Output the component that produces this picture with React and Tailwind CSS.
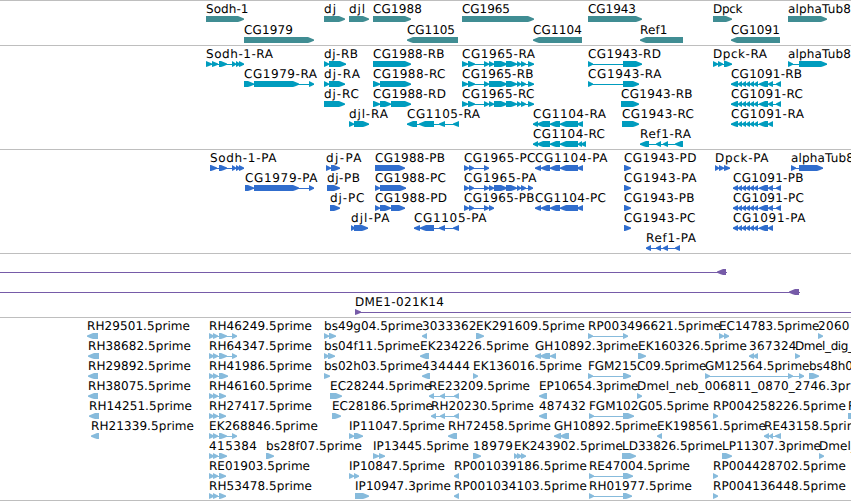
import React from "react";

// Feature: [row, label, label end x, strand, [[start, end], ...]]
const FWD = 1;
const REV = -1;

const genes = [
  [0, "Sodh-1", 248.5, FWD, [[206, 244]]],
  [1, "CG1979", 293, FWD, [[244, 314]]],
  [0, "dj", 336, FWD, [[324, 345]]],
  [0, "djl", 365, FWD, [[349, 369]]],
  [0, "CG1988", 422, FWD, [[373, 411]]],
  [1, "CG1105", 455, REV, [[407, 458]]],
  [0, "CG1965", 510, FWD, [[462, 534]]],
  [1, "CG1104", 582, REV, [[533, 582]]],
  [0, "CG1943", 636, FWD, [[588, 642]]],
  [1, "Ref1", 667.5, REV, [[640, 683]]],
  [0, "Dpck", 742.5, FWD, [[713, 732]]],
  [1, "CG1091", 780, REV, [[731, 780]]],
  [0, "alphaTub8", 851, FWD, [[788, 827]]],
];

const exons1965 = [[484, 489], [489, 494], [494, 507], [506, 517], [517, 521], [521, 526], [528, 534]];
const exons1091 = [[738, 742], [742, 746], [746, 750], [750, 754], [754, 758], [759, 768], [768, 773]];

const transcripts = [
  [0, "Sodh-1-RA", 273, FWD, [[206, 212], [212, 218], [219, 227], [232, 236], [236, 240], [239, 244]]],
  [1, "CG1979-RA", 317, FWD, [[244, 254], [254, 299], [309, 314]]],
  [0, "dj-RB", 358, FWD, [[324, 329], [329, 346]]],
  [1, "dj-RA", 360, FWD, [[324, 329], [329, 345]]],
  [2, "dj-RC", 359, FWD, [[324, 345]]],
  [3, "djl-RA", 388, FWD, [[349, 354], [354, 369]]],
  [0, "CG1988-RB", 444.5, FWD, [[373, 411]]],
  [1, "CG1988-RC", 445.5, FWD, [[373, 380], [380, 411]]],
  [2, "CG1988-RD", 446, FWD, [[373, 380], [380, 391], [391, 411]]],
  [3, "CG1105-RA", 480, REV, [[407, 417], [419, 434], [439, 445], [453, 459]]],
  [0, "CG1965-RA", 535, FWD, [[462, 468], [468, 475], ...exons1965]],
  [1, "CG1965-RB", 533.5, FWD, [[462, 468], [468, 475], [484, 489], [489, 507], ...exons1965.slice(3)]],
  [2, "CG1965-RC", 534.5, FWD, [[462, 468], [468, 475], ...exons1965]],
  [3, "CG1104-RA", 606, REV, [[533, 538], [537, 550], [550, 560], [560, 578], [577, 583]]],
  [4, "CG1104-RC", 605, REV, [[533, 538], [537, 550], [550, 560], [560, 578], [578, 582], [581, 586]]],
  [0, "CG1943-RD", 661, FWD, [[588, 593], [623, 642]]],
  [1, "CG1943-RA", 661.5, FWD, [[588, 593], [623, 639]]],
  [2, "CG1943-RB", 692.5, FWD, [[621, 639]]],
  [3, "CG1943-RC", 694, FWD, [[622, 639]]],
  [4, "Ref1-RA", 691, REV, [[640, 649], [656, 661], [663, 668], [675, 683]]],
  [0, "Dpck-RA", 767, FWD, [[713, 718], [718, 723], [724, 732]]],
  [1, "CG1091-RB", 802, REV, [[731, 738], ...exons1091, [776, 781]]],
  [2, "CG1091-RC", 803, REV, [[731, 738], ...exons1091, [776, 781]]],
  [3, "CG1091-RA", 804, REV, [[731, 738], ...exons1091]],
  [0, "alphaTub8", 851, FWD, [[788, 793], [799, 827]]],
];

const proteins = [
  [0, "Sodh-1-PA", 276.5, FWD, [[210, 217], [219, 227], [232, 236], [236, 240], [239, 244]]],
  [1, "CG1979-PA", 317.5, FWD, [[245, 254], [254, 299], [309, 314]]],
  [0, "dj-PA", 361.5, FWD, [[326, 331], [331, 340]]],
  [1, "dj-PB", 360, FWD, [[327, 340]]],
  [2, "dj-PC", 364.5, FWD, [[330, 340]]],
  [3, "djl-PA", 389.5, FWD, [[351, 355], [354, 368]]],
  [0, "CG1988-PB", 445, FWD, [[375, 405]]],
  [1, "CG1988-PC", 446, FWD, [[375, 380], [380, 406]]],
  [2, "CG1988-PD", 447, FWD, [[375, 380], [380, 391], [391, 405]]],
  [3, "CG1105-PA", 486.5, REV, [[414, 420], [420, 434], [439, 445], [453, 459]]],
  [0, "CG1965-PC", 535.5, FWD, [[464, 469], [469, 474], [484, 489]]],
  [1, "CG1965-PA", 536.5, FWD, [[464, 469], [469, 474], ...exons1965.slice(0, 6), [528, 533]]],
  [2, "CG1965-PB", 534.5, FWD, [[464, 469], [469, 474], [484, 489], [489, 494]]],
  [0, "CG1104-PA", 607.5, REV, [[535, 541], [541, 550], [550, 560], [560, 578], [577, 583]]],
  [2, "CG1104-PC", 606, REV, [[535, 541], [541, 550], [550, 560], [560, 578], [577, 583]]],
  [0, "CG1943-PD", 696.5, FWD, [[624, 631]]],
  [1, "CG1943-PA", 696.5, FWD, [[624, 631]]],
  [2, "CG1943-PB", 694.5, FWD, [[624, 631]]],
  [3, "CG1943-PC", 695.5, FWD, [[624, 631]]],
  [4, "Ref1-PA", 696, REV, [[646, 651], [656, 661], [663, 668], [675, 680]]],
  [0, "Dpck-PA", 768.5, FWD, [[715, 719], [719, 724], [724, 730]]],
  [1, "CG1091-PB", 803.5, REV, [[733, 738], ...exons1091, [776, 781]]],
  [2, "CG1091-PC", 804, REV, [[733, 738], ...exons1091, [776, 781]]],
  [3, "CG1091-PA", 805.5, REV, [[733, 738], ...exons1091]],
  [0, "alphaTub8", 854, FWD, [[791, 796], [799, 823]]],
];

const clones = [
  [0, "", 0, REV, [[-10, 0], [717, 726]]],
  [1, "", 0, REV, [[-10, 0], [789, 799]]],
  [2, "DME1-021K14", 444, FWD, [[355, 361], [860, 870]]],
];

const ests = [
  [0, "RH29501.5prime", 190, REV, [[87, 98]]],
  [1, "RH38682.5prime", 191, REV, [[88, 99]]],
  [2, "RH29892.5prime", 191, REV, [[88, 98]]],
  [3, "RH38075.5prime", 191, REV, [[88, 98]]],
  [4, "RH14251.5prime", 192, REV, [[89, 99]]],
  [5, "RH21339.5prime", 194, REV, [[91, 99]]],

  [0, "RH46249.5prime", 312, FWD, [[209, 214], [213, 218], [219, 227], [232, 237]]],
  [1, "RH64347.5prime", 312, FWD, [[209, 214], [213, 218], [219, 227], [232, 237]]],
  [2, "RH41986.5prime", 312, FWD, [[209, 214], [213, 218], [219, 228]]],
  [3, "RH46160.5prime", 312, FWD, [[209, 214], [213, 218], [219, 226]]],
  [4, "RH27417.5prime", 312, FWD, [[209, 214], [213, 218], [219, 226]]],
  [5, "EK268846.5prime", 318, FWD, [[209, 214], [213, 218], [219, 227], [232, 237]]],
  [6, "415384", 257, FWD, [[209, 214], [213, 218], [219, 227]]],
  [7, "RE01903.5prime", 310, FWD, [[209, 214], [213, 218], [219, 226]]],
  [8, "RH53478.5prime", 312, FWD, [[209, 214], [213, 218], [219, 226]]],
  [6, "bs28f07.5prime", 362, FWD, [[266, 274]]],

  [0, "bs49g04.5prime", 423, FWD, [[324, 329], [329, 336]]],
  [1, "bs04f11.5prime", 420, FWD, [[324, 329], [328, 335]]],
  [2, "bs02h03.5prime", 422.5, FWD, [[324, 330]]],
  [3, "EC28244.5prime", 431.5, FWD, [[330, 342]]],
  [4, "EC28186.5prime", 433, FWD, [[332, 341]]],
  [5, "IP11047.5prime", 445, FWD, [[349, 354], [354, 363]]],
  [6, "IP13445.5prime", 469, FWD, [[373, 379], [379, 385]]],
  [7, "IP10847.5prime", 445, FWD, [[349, 354], [354, 359]]],
  [8, "IP10947.3prime", 451, FWD, [[355, 369]]],

  [0, "3033362", 476.5, REV, [[422, 427]]],
  [1, "EK234226.5prime", 529, REV, [[420, 429]]],
  [2, "434444", 470, REV, [[422, 430]]],
  [3, "RE23209.5prime", 530, REV, [[429, 434], [440, 445], [454, 459]]],
  [4, "RH20230.5prime", 534, REV, [[431, 436], [440, 445], [454, 459]]],
  [5, "RH72458.5prime", 551, REV, [[448, 457]]],
  [7, "RP001039186.5prime", 587, REV, [[454, 459]]],
  [8, "RP001034103.5prime", 587, REV, [[454, 459]]],

  [0, "EK291609.5prime", 585, FWD, [[476, 484]]],
  [2, "EK136016.5prime", 582, FWD, [[473, 478]]],
  [6, "18979", 513, FWD, [[473, 481]]],
  [6, "EK243902.5prime", 623, FWD, [[514, 518], [517, 522], [521, 526]]],
  [1, "GH10892.3prime", 638.5, REV, [[535, 541], [540, 550], [550, 556]]],
  [3, "EP10654.3prime", 638.5, REV, [[539, 547]]],
  [4, "487432", 586, REV, [[539, 547]]],
  [5, "GH10892.5prime", 657.5, REV, [[554, 561], [560, 569]]],

  [0, "RP003496621.5prime", 721, FWD, [[588, 593], [623, 628]]],
  [2, "FGM215C09.5prime", 706.5, FWD, [[588, 593], [623, 631]]],
  [4, "FGM102G05.5prime", 709, FWD, [[589, 594], [623, 634]]],
  [6, "LD33826.5prime", 722.5, FWD, [[622, 636]]],
  [7, "RE47004.5prime", 690, FWD, [[589, 594], [623, 633]]],
  [8, "RH01977.5prime", 692, FWD, [[589, 594], [623, 632]]],
  [1, "EK160326.5prime", 747, FWD, [[638, 646]]],
  [3, "Dmel_neb_006811_0870_2746.3pr", 850.5, FWD, [[637, 642]]],
  [5, "EK198561.5prime", 766, REV, [[657, 662]]],

  [0, "EC14783.5prime", 819.5, FWD, [[719, 724], [724, 729]]],
  [1, "367324", 796.5, REV, [[749, 754], [753, 758]]],
  [2, "GM12564.5prime", 809.5, FWD, [[705, 710], [788, 793], [799, 804]]],
  [4, "RP004258226.5prime", 846, FWD, [[713, 718]]],
  [5, "RE43158.5prime", 866, REV, [[764, 769], [769, 773], [775, 781]]],
  [6, "LP11307.3prime", 821, FWD, [[722, 732]]],
  [7, "RP004428702.5prime", 846, FWD, [[713, 718]]],
  [8, "RP004136448.5prime", 846, FWD, [[713, 718]]],
  [0, "2060", 849.5, FWD, [[818, 823]]],
  [1, "Dmel_dig_", 854, FWD, [[795, 800]]],
  [2, "bs48h0", 853, FWD, [[809, 819]]],
  [6, "Dmel_", 857, FWD, [[819, 824]]],
  [4, "R", 856, FWD, [[848, 860]]],
];

// Block with a blunt pointed end in the direction of its strand.
function blockPoints(a, b, y, strand) {
  const tip = Math.min(b - a, 6);
  const x = (d) => (strand === FWD ? b - d : a + d);
  const back = strand === FWD ? a : b;
  return [
    [back, y],
    [x(tip), y],
    [x(tip * 0.6), y + 1],
    [x(0), y + 2.6],
    [x(0), y + 3.8],
    [x(tip * 0.6), y + 5.2],
    [x(tip), y + 6],
    [back, y + 6],
  ]
    .map((p) => p.join(","))
    .join(" ");
}

function Feature({ feature, baseline }) {
  const [, label, labelEnd, strand, blocks] = feature;
  const start = blocks[0][0];
  const end = blocks[blocks.length - 1][1];
  const y = baseline + 3;
  return (
    <g>
      {blocks.length > 1 && (
        <rect
          x={start}
          y={y + 3}
          width={end - start + (label ? 0 : 1)}
          height="1"
          shapeRendering="crispEdges"
        />
      )}
      {blocks.map(([a, b]) => (
        <polygon key={a} points={blockPoints(a, b, y, strand)} />
      ))}
      {label && (
        <text
          x={start}
          y={baseline}
          textLength={labelEnd - start}
          textRendering="geometricPrecision"
          className="fill-black text-[12px]"
        >
          {label}
        </text>
      )}
    </g>
  );
}

// `top` is the track's offset in the view; feature baselines share that scale.
function Track({ features, top, height, baseline, step, className }) {
  return (
    <section className="w-full border-t border-[#bebebe]">
      <svg
        width="851"
        height={height}
        viewBox={`0 ${top} 851 ${height}`}
        className={`block ${className}`}
      >
        {features.map((f, i) => (
          <Feature key={i} feature={f} baseline={baseline + f[0] * step} />
        ))}
      </svg>
    </section>
  );
}

export default function App() {
  return (
    <main className="flex h-[501px] w-[851px] flex-col overflow-hidden border-b border-[#bebebe] bg-white font-['DejaVu_Sans',sans-serif]">
      <Track features={genes} top={1} height={44} baseline={13} step={21} className="fill-[#408d93]" />
      <Track features={transcripts} top={46} height={103} baseline={58} step={20} className="fill-[#009cbe]" />
      <Track features={proteins} top={150} height={103} baseline={162} step={20} className="fill-[#306dcd]" />
      <Track features={clones} top={254} height={63} baseline={266} step={20} className="fill-[#765ba8]" />
      <Track features={ests} top={318} height={182} baseline={330} step={20} className="fill-[#87bbdc]" />
    </main>
  );
}
